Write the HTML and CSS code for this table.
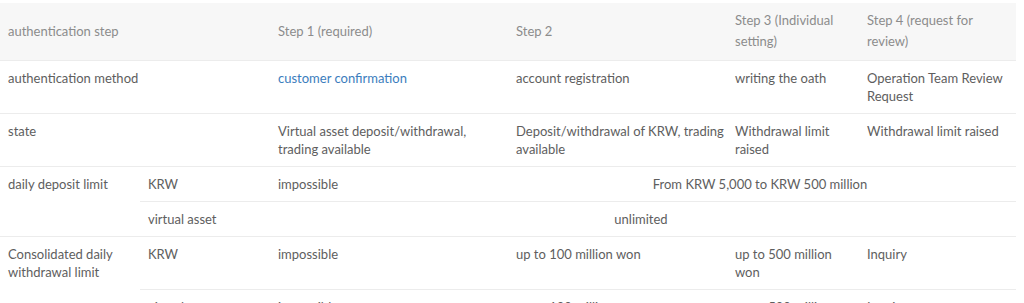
FILE: index.html
```html
<!DOCTYPE html>
<html lang="en">
<head>
  <meta charset="UTF-8" />
  <title>Authentication steps</title>
  <link rel="stylesheet" href="styles.css">
</head>
<body>
  <table class="limits">
    <colgroup>
      <col class="c-title">
      <col class="c-sub">
      <col class="c-step1">
      <col class="c-step2">
      <col class="c-step3">
      <col class="c-step4">
    </colgroup>
    <thead>
      <tr>
        <th colspan="2">authentication step</th>
        <th>Step 1 (required)</th>
        <th>Step 2</th>
        <th>Step 3 (Individual setting)</th>
        <th>Step 4 (request for review)</th>
      </tr>
    </thead>
    <tbody>
      <tr>
        <td colspan="2">authentication method</td>
        <td><a href="#">customer confirmation</a></td>
        <td class="s2">account registration</td>
        <td>writing the oath</td>
        <td>Operation Team Review Request</td>
      </tr>
      <tr>
        <td colspan="2">state</td>
        <td>Virtual asset deposit/withdrawal, trading available</td>
        <td class="s2">Deposit/withdrawal of KRW, trading available</td>
        <td>Withdrawal limit raised</td>
        <td>Withdrawal limit raised</td>
      </tr>
      <tr>
        <td rowspan="2">daily deposit limit</td>
        <td>KRW</td>
        <td>impossible</td>
        <td colspan="3" class="center">From KRW 5,000 to KRW 500 million</td>
      </tr>
      <tr>
        <td>virtual asset</td>
        <td colspan="4" class="center">unlimited</td>
      </tr>
      <tr>
        <td rowspan="2">Consolidated daily withdrawal limit</td>
        <td>KRW</td>
        <td>impossible</td>
        <td class="s2">up to 100 million won</td>
        <td>up to 500 million won</td>
        <td>Inquiry</td>
      </tr>
      <tr>
        <td>virtual asset</td>
        <td>impossible</td>
        <td class="s2">up to 100 million won</td>
        <td>up to 500 million won</td>
        <td>Inquiry</td>
      </tr>
    </tbody>
  </table>
</body>
</html>
```

FILE: styles.css
```css
* {
  box-sizing: border-box;
  margin: 0;
  padding: 0;
}
body {
  background-color: #fff;
  font-family: 'Lato', 'Liberation Sans', sans-serif;
  font-size: 13px;
  color: #5e5e5e;
  padding-top: 3px;
}
.limits {
  width: 1016px;
  border-collapse: collapse;
  table-layout: fixed;
}
.c-title { width: 140px; }
.c-sub { width: 130px; }
.c-step1 { width: 238px; }
.c-step2 { width: 219px; }
.c-step3 { width: 132px; }
.c-step4 { width: 157px; }
.limits th {
  background-color: #f7f7f7;
  color: #8c8c8c;
  font-weight: normal;
  text-align: left;
  vertical-align: middle;
  line-height: 21px;
  padding: 7px 12px 8px 8px;
  border-bottom: 1px solid #ececec;
}
.limits td {
  text-align: left;
  vertical-align: top;
  line-height: 18px;
  padding: 8px 12px 8px 8px;
  border-bottom: 1px solid #ececec;
}
.limits td.s2 {
  padding-right: 0;
}
.limits td.center {
  text-align: center;
}
.limits a {
  color: #3b7dbd;
  text-decoration: none;
}
```
